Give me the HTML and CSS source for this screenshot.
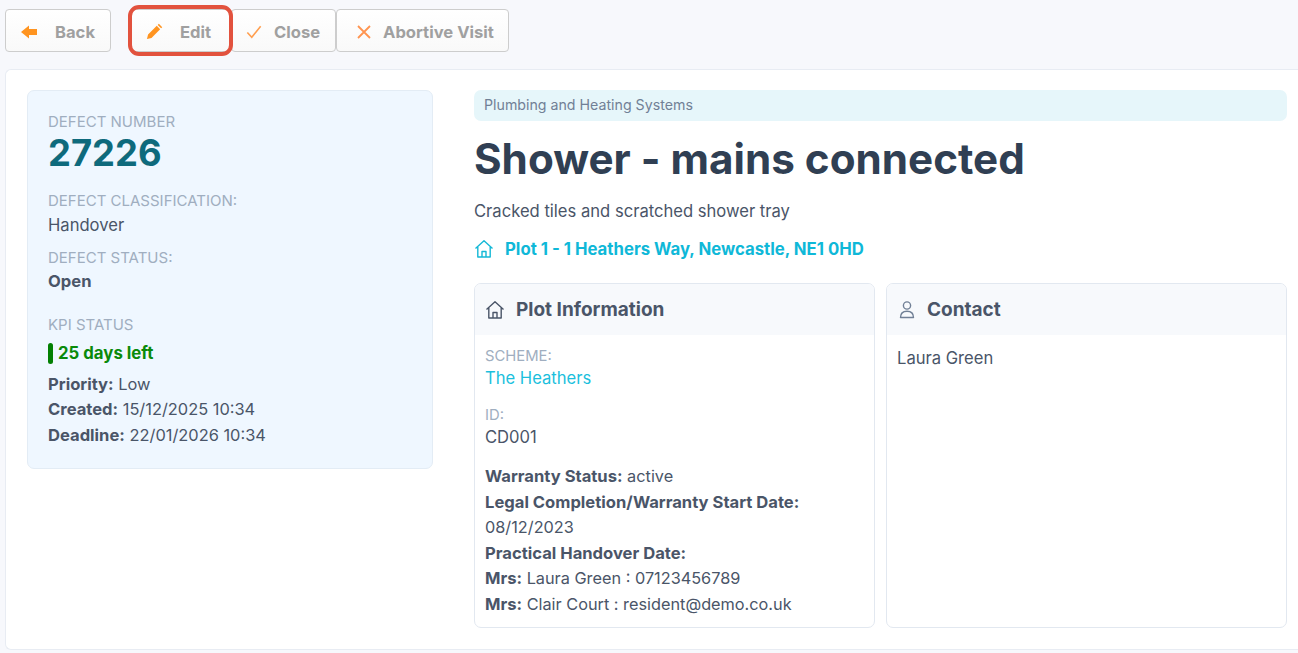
FILE: index.html
```html
<!DOCTYPE html>
<html lang="en">
<head>
<meta charset="utf-8">
<title>Defect 27226</title>
<link rel="stylesheet" href="styles.css">
</head>
<body>
<div class="toolbar">
  <a class="btn btn-back"><svg class="ico" viewBox="0 0 16 16"><path d="M0 8 L8 1.5 V5 H16 V11 H8 V14.5 Z" fill="#ff9420"/></svg><span>Back</span></a>
  <a class="btn btn-edit"><svg class="ico" viewBox="0 0 18 18"><path d="M1 17 L2.2 12.2 L11.4 3 L15 6.6 L5.8 15.8 Z M12.4 2 L13.6 0.8 L17.2 4.4 L16 5.6 Z" fill="#ff9420"/></svg><span>Edit</span></a>
  <a class="btn btn-close"><svg class="ico" viewBox="0 0 18 18"><path d="M1.5 9.5 L6.5 15 L16.5 2.5" fill="none" stroke="#ff9f50" stroke-width="1.8"/></svg><span>Close</span></a>
  <a class="btn btn-abort"><svg class="ico" viewBox="0 0 16 16"><path d="M2 2 L14 14 M14 2 L2 14" fill="none" stroke="#ff9450" stroke-width="1.8"/></svg><span>Abortive Visit</span></a>
  <div class="highlight"></div>
</div>
<main class="panel">
  <aside class="summary">
    <div class="label">DEFECT NUMBER</div>
    <div class="number">27226</div>
    <div class="label label-class">DEFECT CLASSIFICATION:</div>
    <div class="value">Handover</div>
    <div class="label label-status">DEFECT STATUS:</div>
    <div class="value strong-val">Open</div>
    <div class="label label-kpi">KPI STATUS</div>
    <div class="kpi"><i class="kpi-bar"></i>25 days left</div>
    <div class="meta"><b>Priority:</b> Low</div>
    <div class="meta"><b>Created:</b> 15/12/2025 10:34</div>
    <div class="meta"><b>Deadline:</b> 22/01/2026 10:34</div>
  </aside>
  <section class="detail">
    <div class="badge">Plumbing and Heating Systems</div>
    <h1>Shower - mains connected</h1>
    <p class="desc">Cracked tiles and scratched shower tray</p>
    <a class="plot-link"><svg class="home" viewBox="0 0 20 20"><path d="M1.5 9.5 L10 1.8 L18.5 9.5 M3.8 8 V18 H16.2 V8 M8 18 V12.5 H12 V18" fill="none" stroke="#14b8d6" stroke-width="1.4" stroke-linejoin="round"/></svg>Plot 1 - 1 Heathers Way, Newcastle, NE1 0HD</a>
    <div class="cards">
      <article class="card">
        <header class="card-head"><svg class="home" viewBox="0 0 20 20"><path d="M1.5 9.5 L10 1.8 L18.5 9.5 M3.8 8 V18 H16.2 V8 M8 18 V12.5 H12 V18" fill="none" stroke="#4a5568" stroke-width="1.4" stroke-linejoin="round"/></svg>Plot Information</header>
        <div class="card-body">
          <div class="small-label">SCHEME:</div>
          <a class="scheme">The Heathers</a>
          <div class="small-label id-label">ID:</div>
          <div class="card-val">CD001</div>
          <div class="lines">
            <div><b>Warranty Status:</b> active</div>
            <div><b>Legal Completion/Warranty Start Date:</b></div>
            <div>08/12/2023</div>
            <div><b>Practical Handover Date:</b></div>
            <div><b>Mrs:</b> Laura Green : 07123456789</div>
            <div><b>Mrs:</b> Clair Court : resident@demo.co.uk</div>
          </div>
        </div>
      </article>
      <article class="card">
        <header class="card-head"><svg class="home person" viewBox="0 0 20 20"><circle cx="10" cy="5.5" r="3.6" fill="none" stroke="#718096" stroke-width="1.4"/><path d="M3.5 17.5 C3.5 13 6.5 11.2 10 11.2 C13.5 11.2 16.5 13 16.5 17.5 Z" fill="none" stroke="#718096" stroke-width="1.4" stroke-linejoin="round"/></svg>Contact</header>
        <div class="card-body contact-body">Laura Green</div>
      </article>
    </div>
  </section>
</main>
</body>
</html>
```
FILE: styles.css
```css
* { box-sizing: border-box; }
html, body { margin: 0; height: 100%; overflow: hidden; }
body {
  background: #f7f8fc;
  font-family: "Inter", "Liberation Sans", sans-serif;
  font-size: 16.6px;
  color: #4a5568;
  width: 1298px;
  height: 653px;
}
.toolbar {
  position: relative;
  display: flex;
  height: 69px;
  padding: 9px 0 0 5px;
  align-items: flex-start;
}
.btn {
  display: flex;
  align-items: center;
  height: 43px;
  background: linear-gradient(#ffffff, #f9f9f9);
  border: 1px solid #cdcdcd;
  border-radius: 4px;
  color: #a0a0a0;
  font-weight: 700;
  font-size: 16.6px;
  padding-left: 15px;
  padding-top: 2px;
}
.ico { width: 16px; height: 16px; flex: none; margin-right: 18px; }
.btn-back { width: 106px; margin-right: 20px; }
.btn-edit { width: 100px; padding-left: 14px; }
.btn-edit .ico { width: 17px; height: 17px; margin-right: 17px; }
.btn-close { width: 105px; padding-left: 14px; }
.btn-close .ico { margin-right: 12px; }
.btn-abort { width: 173px; padding-left: 19px; }
.btn-abort .ico { margin-right: 11px; }
.highlight {
  position: absolute;
  left: 128px;
  top: 5px;
  width: 105px;
  height: 51px;
  border: 4px solid #e2523e;
  border-radius: 11px;
}
.panel {
  display: flex;
  margin-left: 5px;
  height: 581px;
  background: #fff;
  border: 1px solid #e8ecf3;
  border-right: 0;
  border-radius: 6px 0 0 6px;
  padding: 20px 11px 0 21px;
  gap: 41px;
}
.summary {
  width: 406px;
  height: 379px;
  flex: none;
  background: #eff7ff;
  border: 1px solid #e3ecf5;
  border-radius: 7px;
  padding: 21px 20px 0;
}
.label { color: #a0aec0; font-size: 15px; line-height: 20px; }
.number { color: #0e6a7c; font-size: 36.4px; font-weight: 700; line-height: 40px; margin-top: 1px; }
.label-class { margin-top: 18px; }
.value { line-height: 26px; margin-top: 1px; }
.label-status { margin-top: 10px; }
.strong-val { font-weight: 700; margin-top: 0; }
.label-kpi { margin-top: 21px; }
.kpi {
  display: flex;
  align-items: center;
  color: #0a8a0a;
  font-weight: 700;
  font-size: 16.8px;
  line-height: 22px;
  margin-top: 7px;
  margin-bottom: 8px;
}
.kpi-bar { width: 5px; height: 21px; border-radius: 3px; background: #038003; margin-right: 5px; }
.meta { line-height: 25.4px; font-size: 16.4px; }
.meta b { font-size: 16.6px; font-weight: 700; }
.detail { flex: 1; min-width: 0; }
.badge {
  height: 31px;
  background: #e6f6fa;
  border-radius: 7px;
  color: #718096;
  font-size: 14.2px;
  line-height: 30px;
  padding-left: 10px;
}
h1 {
  margin: 13px 0 0;
  color: #303f53;
  font-size: 42.2px;
  font-weight: 700;
  line-height: 49px;
}
.desc { margin: 16px 0 0; line-height: 24px; color: #4a5568; }
.plot-link {
  display: flex;
  align-items: center;
  color: #0fb8d8;
  font-weight: 700;
  font-size: 16.75px;
  line-height: 24px;
  margin-top: 14px;
}
.home { width: 20px; height: 20px; margin-right: 11px; flex: none; }
.cards { display: flex; gap: 11px; margin-top: 22px; }
.card {
  flex: 1;
  height: 345px;
  border: 1px solid #e2e8f0;
  border-radius: 7px;
  overflow: hidden;
}
.card-head {
  display: flex;
  align-items: center;
  height: 51px;
  background: #f7f9fc;
  padding: 0 10px;
  font-size: 19px;
  font-weight: 700;
  color: #4a5568;
}
.person { margin-right: 10px; }
.card-body { padding: 11px 10px; }
.contact-body { padding-top: 11px; line-height: 24px; }
.small-label { color: #a0aec0; font-size: 14.8px; line-height: 20px; }
.scheme { display: block; color: #1bbfdd; line-height: 25px; }
.id-label { margin-top: 14px; }
.card-val { line-height: 25px; }
.lines { margin-top: 14px; line-height: 25.5px; font-size: 16.3px; }
.lines b { font-size: 16.6px; font-weight: 700; }
```
